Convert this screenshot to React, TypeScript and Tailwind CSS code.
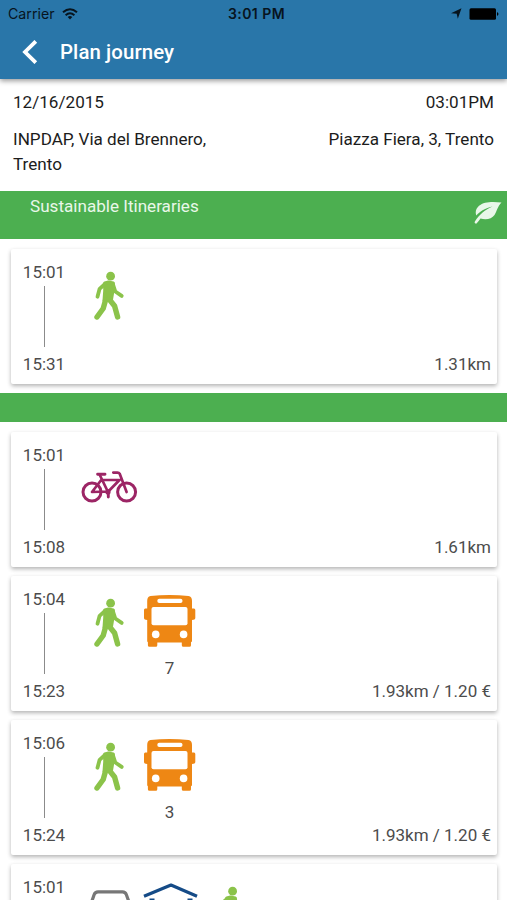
import React from 'react';

type Leg = { kind: 'walk' | 'bike' | 'bus' | 'car' | 'parking'; label?: string };
type Trip = { start: string; end?: string; info?: string; legs: Leg[] };

const sustainable: Trip[] = [
  { start: '15:01', end: '15:31', info: '1.31km', legs: [{ kind: 'walk' }] },
];

const others: Trip[] = [
  { start: '15:01', end: '15:08', info: '1.61km', legs: [{ kind: 'bike' }] },
  { start: '15:04', end: '15:23', info: '1.93km / 1.20 €', legs: [{ kind: 'walk' }, { kind: 'bus', label: '7' }] },
  { start: '15:06', end: '15:24', info: '1.93km / 1.20 €', legs: [{ kind: 'walk' }, { kind: 'bus', label: '3' }] },
  { start: '15:01', legs: [{ kind: 'car' }, { kind: 'parking' }, { kind: 'walk' }] },
];

function Walk() {
  return (
    <g fill="none" stroke="#8bc34a" strokeLinecap="round" strokeLinejoin="round">
      <circle cx="32.6" cy="11.2" r="4.4" fill="#8bc34a" stroke="none" />
      <path d="M27 18.3 L30.5 17.3 L35 18.3 L34.8 25 L33.3 34 L26.3 35.5 L27 26 Z" fill="#8bc34a" strokeWidth="3.6" />
      <path d="M27 18.8 L21.6 23.8 L19.5 31.7" strokeWidth="3.8" />
      <path d="M34.8 18.8 L37.3 26.5 L43.7 30.9" strokeWidth="3.8" />
      <path d="M27.6 35 L25.2 43.5 L19 52" strokeWidth="5.4" />
      <path d="M31 34 L36.6 41 L39.6 52" strokeWidth="5.4" />
    </g>
  );
}

function Bike() {
  return (
    <g fill="none" stroke="#9c2565" strokeWidth="3" strokeLinecap="round" strokeLinejoin="round">
      <circle cx="14" cy="44" r="9" />
      <circle cx="48.6" cy="44" r="9" />
      <path d="M14 44 L23.2 32 H41.5 L30.3 43.5 Z M21.8 27 L30 44 M48.6 44 L41.6 25.6 Q41 24.6 39.5 24.6 H35.3" strokeWidth="2.7" />
      <path d="M19.6 26.2 H27 M30.3 44 V49" strokeWidth="2.9" />
      <circle cx="30" cy="44" r="2.6" fill="#9c2565" stroke="none" />
    </g>
  );
}

function Bus() {
  return (
    <>
      <path
        fill="#ee8714"
        d="M11.5 4 Q30.5 2 49.5 4 Q53 4.6 53 9 V16.5 H55 Q56.3 16.5 56.3 18 V26 Q56.3 27.8 53 28 V49 Q53 50 52 50.3 V53.2 Q52 54.8 50.5 54.8 H44.3 Q42.8 54.8 42.8 53.2 V50.5 H18.3 V53.2 Q18.3 54.8 16.8 54.8 H10.4 Q8.9 54.8 8.9 53.2 V50.3 Q8.2 50 8.2 49 V28 Q5 27.8 5 26 V18 Q5 16.5 6.3 16.5 H8.2 V9 Q8.2 4.6 11.5 4 Z"
      />
      <rect x="18.3" y="6.8" width="25.2" height="4.2" rx="2" fill="#fff" />
      <rect x="12.5" y="15" width="36" height="18.2" rx="2" fill="#fff" />
      <circle cx="16.7" cy="42.4" r="3.8" fill="#fff" />
      <circle cx="44.6" cy="42.4" r="3.8" fill="#fff" />
    </>
  );
}

function Car() {
  return (
    <path
      d="M9 45 V30 L13.6 22 L16.2 14.5 Q17.2 11.8 20 11.8 H44.5 Q47.3 11.8 48.3 14.5 L51 22 L55 30 V45 Z"
      fill="none"
      stroke="#777"
      strokeWidth="3.2"
      strokeLinejoin="round"
    />
  );
}

function Parking() {
  return (
    <g fill="none" stroke="#154b87" strokeWidth="3.2" strokeLinejoin="round">
      <path d="M5 16.3 L32 5 L58 16.3" />
      <path d="M13 50 V18.5 M51 50 V18.5" strokeWidth="5" />
    </g>
  );
}

const drawings = { walk: Walk, bike: Bike, bus: Bus, car: Car, parking: Parking };

function Card({ trip }: { trip: Trip }) {
  return (
    <article className="mr-[10px] ml-[11px] flex h-[135px] shrink-0 rounded-[2px] bg-white pt-[11px] pr-[6px] pl-[12px] text-[17px] leading-[24px] text-[#4c4c4c] shadow-[0_2px_4px_rgba(0,0,0,0.3)]">
      <div className="flex w-[42px] flex-col items-center">
        <span>{trip.start}</span>
        <span className="mt-[2px] mb-[5px] h-[61px] w-px bg-[#8b8b8b]" />
        {trip.end && <span>{trip.end}</span>}
      </div>
      <div className="ml-[13px] flex pt-[5px]">
        {trip.legs.map((leg, i) => {
          const Drawing = drawings[leg.kind];
          return (
            <div key={i} className="flex w-[61px] flex-col items-center">
              <svg width="61" height="60" viewBox="0 0 61 60">
                <Drawing />
              </svg>
              {leg.label && <span className="mt-[4px]">{leg.label}</span>}
            </div>
          );
        })}
      </div>
      {trip.info && <span className="mt-[92px] ml-auto">{trip.info}</span>}
    </article>
  );
}

export default function App() {
  return (
    <main className="flex h-[900px] w-full flex-col overflow-hidden bg-white font-[Roboto,sans-serif] text-[17.1px]">
      <header className="z-10 h-[79px] shrink-0 bg-[#2976a9] shadow-[0_2px_5px_rgba(0,0,0,0.4)]">
        <div className="grid h-[27px] grid-cols-3 items-center px-[8px] font-[Inter,sans-serif] text-[14px] leading-[27px] text-[#07141e]">
          <div className="flex items-center gap-[7px]">
            <span className="text-[14.2px]">Carrier</span>
            <svg width="16" height="12" viewBox="0 0 16 12" fill="none" stroke="#07141e" strokeWidth="2">
              <path d="M1 4.3 Q8 -1.8 15 4.3 M3.6 7.2 Q8 3.4 12.4 7.2" />
              <path d="M5.7 9 Q8 7.2 10.3 9 L8 11.5 Z" fill="#07141e" stroke="none" />
            </svg>
          </div>
          <span className="pl-[6px] text-center text-[14px] font-semibold tracking-[0.45px] whitespace-nowrap">3:01 PM</span>
          <div className="flex items-center justify-end gap-[7px]">
            <svg width="11" height="11" viewBox="0 0 11 11">
              <path d="M0 5.2 L10.5 .3 L6.8 10.8 L5.7 5.8 Z" fill="#07141e" />
            </svg>
            <svg width="30" height="12" viewBox="0 0 30 12">
              <rect x=".5" y=".2" width="26.5" height="11.6" rx="1.5" />
              <path d="M28 4 Q31 6 28 8 Z" />
            </svg>
          </div>
        </div>
        <div className="flex h-[50px] items-center pl-[22px] text-white">
          <svg width="16" height="24" viewBox="0 0 16 24" fill="none" stroke="white" strokeWidth="3.8">
            <path d="M13.8 1.3 L3 12 L13.8 22.7" />
          </svg>
          <h1 className="ml-[22px] text-[20.4px] font-medium tracking-[0.1px]">Plan journey</h1>
        </div>
      </header>

      <section className="h-[112px] shrink-0 px-[13px] pt-[11px] leading-[24.4px] text-[#1c1c1c]">
        <div className="flex justify-between">
          <span>12/16/2015</span>
          <span>03:01PM</span>
        </div>
        <div className="mt-[13px] flex justify-between">
          <span className="w-[220px]">INPDAP, Via del Brennero, Trento</span>
          <span>Piazza Fiera, 3, Trento</span>
        </div>
      </section>

      <section className="flex h-[48px] shrink-0 justify-between bg-[#4caf50] pr-[5px] pl-[30px] text-[#e9f7e9]">
        <h2 className="pt-[3px] leading-[24px]">Sustainable Itineraries</h2>
        <svg className="mt-[10px]" width="28" height="24" viewBox="0 0 28 24">
          <path
            d="M27.5 1.5 C20 .5 10 .2 5 4.8 C1.5 8 1.2 11.5 2.3 14.6 C6 10.5 10 7.7 18.5 5.6 C11 9 5.5 13.5 1 20.2 Q-.2 22.3 2.2 22.8 C4 21.3 5 19.5 6.5 17.5 C12 19.3 17.8 18 20.5 14 C23 10 23.5 5.5 27.5 1.5 Z"
            fill="#e9f7e9"
          />
        </svg>
      </section>

      <div className="mt-[10px] flex shrink-0 flex-col">
        {sustainable.map((t, i) => <Card key={i} trip={t} />)}
      </div>

      <div className="mt-[9px] h-[29px] shrink-0 bg-[#4caf50]" />

      <div className="mt-[10px] flex shrink-0 flex-col gap-[9px]">
        {others.map((t, i) => <Card key={i} trip={t} />)}
      </div>
    </main>
  );
}
